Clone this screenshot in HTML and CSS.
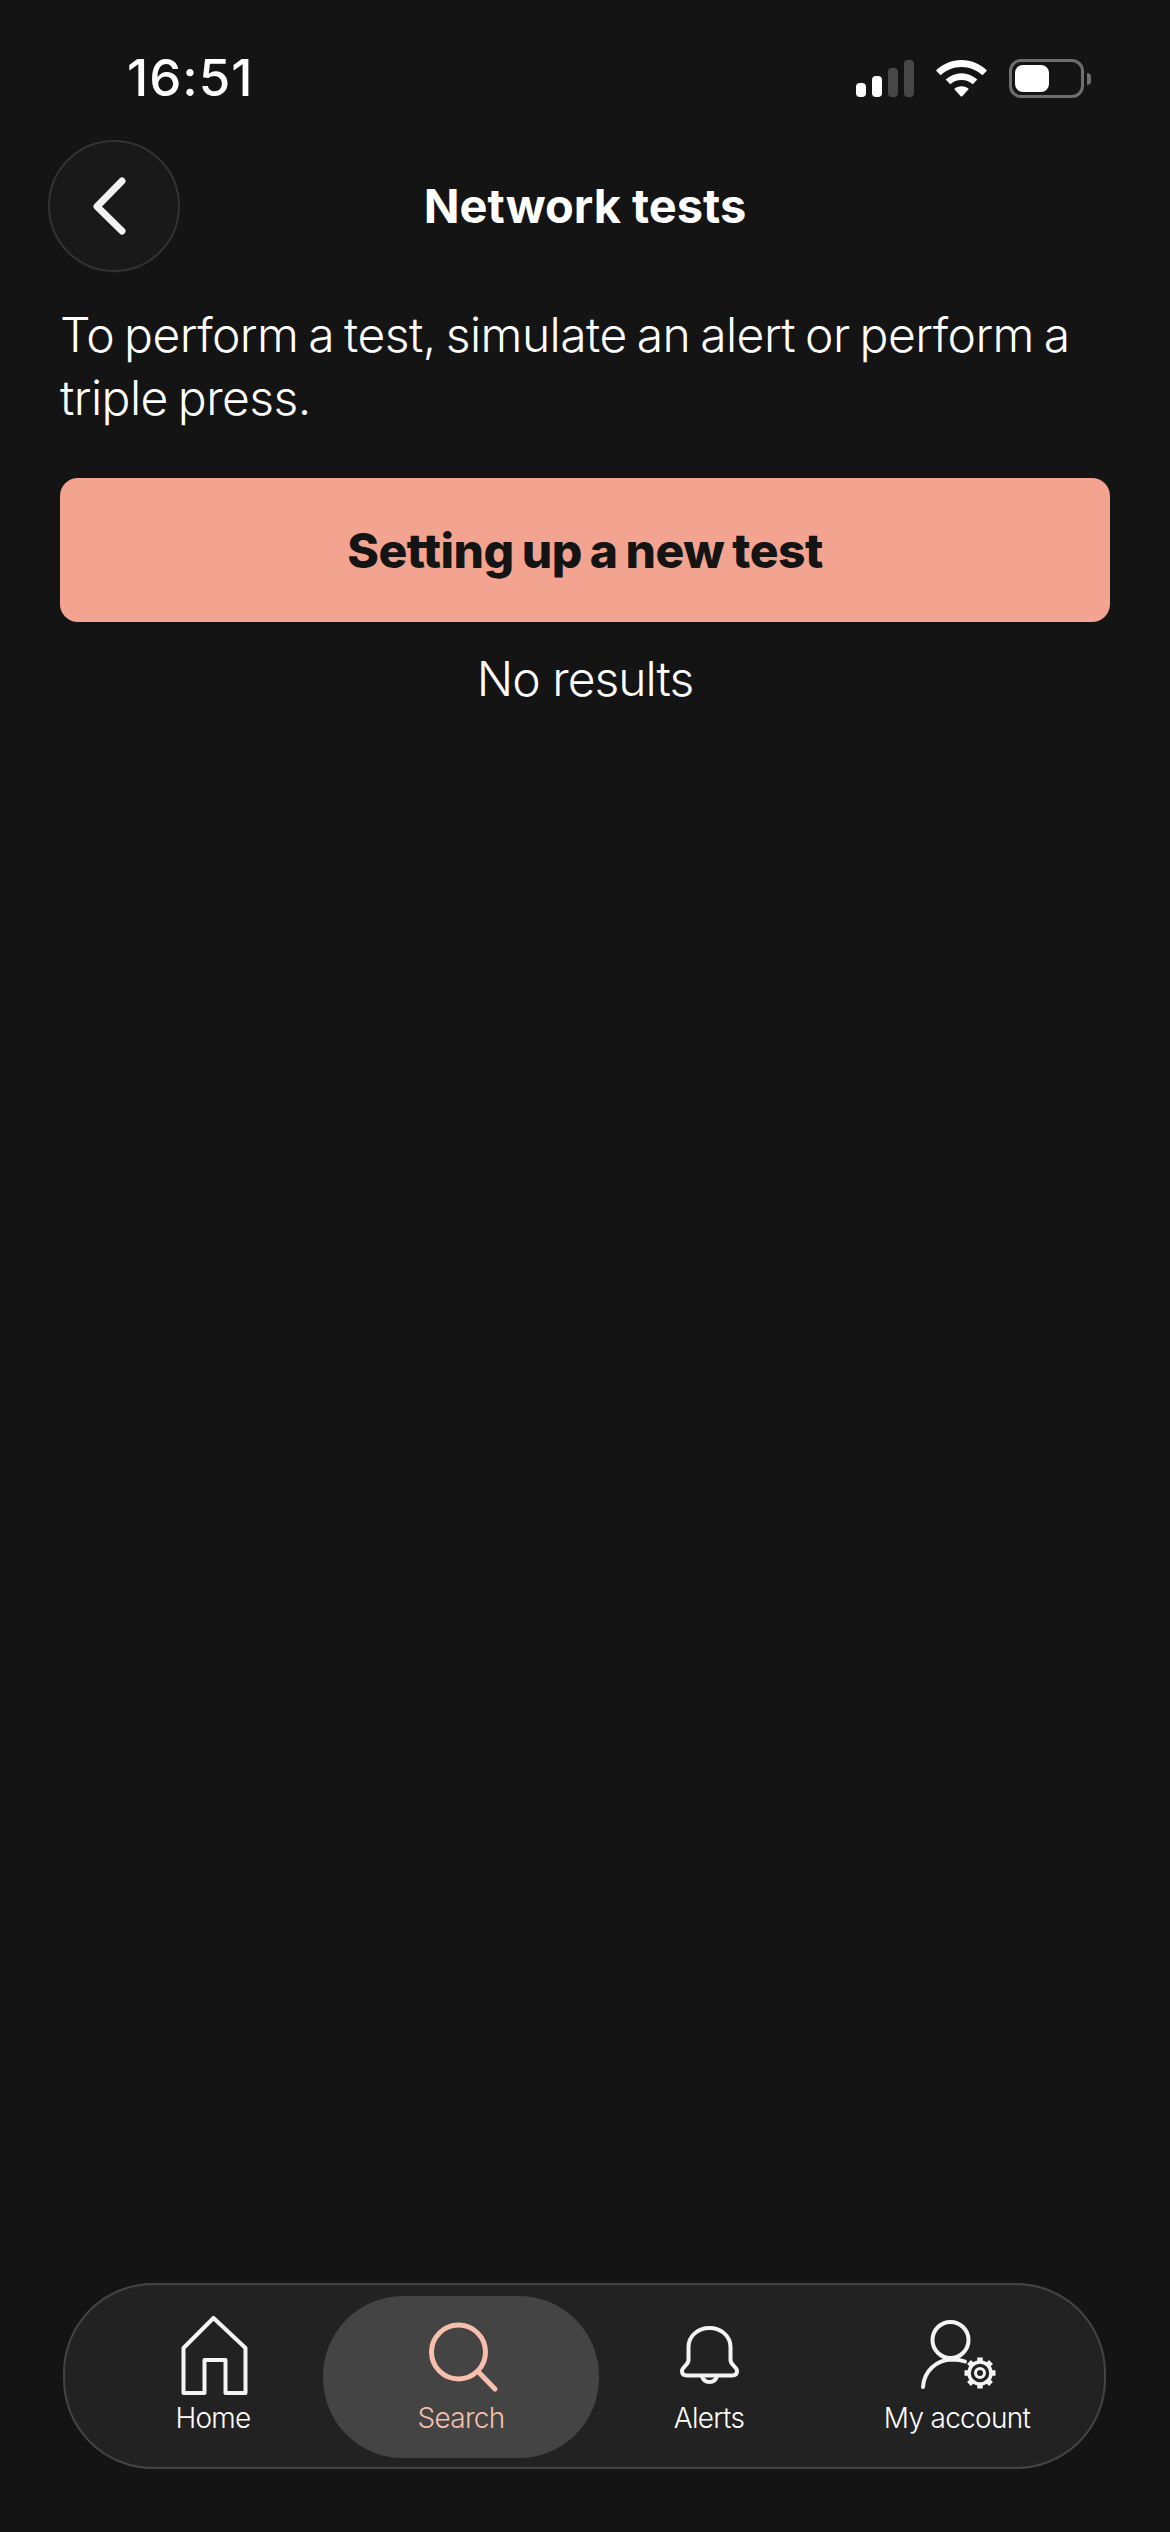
FILE: index.html
```html
<!DOCTYPE html>
<html lang="en">
<head>
<meta charset="utf-8">
<title>Network tests</title>
<link rel="stylesheet" href="styles.css">
</head>
<body>
<div class="screen">
  <div class="status">
    <span class="time">16:51</span>
    <div class="status-icons">
      <svg class="signal" width="58" height="37" viewBox="0 0 58 37">
        <rect x="0" y="23" width="10" height="14" rx="4" fill="#fff"/>
        <rect x="16" y="16" width="10" height="21" rx="4" fill="#fff"/>
        <rect x="32" y="8" width="10" height="29" rx="4" fill="#474747"/>
        <rect x="48" y="0" width="10" height="37" rx="4" fill="#474747"/>
      </svg>
      <svg class="wifi" width="51" height="37" viewBox="0 0 51 37">
        <path d="M25.500 0C35 0 44 3.800 51 10.500L46.500 15.300C40.800 10 33.400 6.900 25.500 6.900C17.600 6.900 10.200 10 4.500 15.300L0 10.500C7 3.800 16 0 25.500 0Z" fill="#fff"/>
        <path d="M25.500 13.200C31.500 13.200 37 15.500 41.300 19.500L36.800 24.200C33.700 21.500 29.800 20 25.500 20C21.200 20 17.300 21.500 14.200 24.200L9.700 19.500C14 15.500 19.500 13.200 25.500 13.200Z" fill="#fff"/>
        <path d="M25.500 26.200C28.300 26.200 30.800 27.200 32.800 29L26.300 36.200C25.900 36.700 25.100 36.700 24.700 36.200L18.200 29C20.200 27.200 22.700 26.200 25.500 26.200Z" fill="#fff"/>
      </svg>
      <div class="battery"><div class="battery-body"><div class="battery-fill"></div></div><div class="battery-nub"></div></div>
    </div>
  </div>

  <header class="header">
    <button class="back" aria-label="Back">
      <svg width="40" height="60" viewBox="0 0 40 60" fill="none"><path d="M31 5L6 30.500L31 55" stroke="#f2f2f2" stroke-width="7" stroke-linecap="round" stroke-linejoin="round"/></svg>
    </button>
    <h1 class="title">Network tests</h1>
  </header>

  <main class="content">
    <p class="intro">To perform a test, simulate an alert or perform a triple press.</p>
    <button class="primary">Setting up a new test</button>
    <p class="empty">No results</p>
  </main>

  <nav class="tabbar">
    <a class="tab">
      <svg class="tab-icon" width="80" height="80" viewBox="0 0 80 80" fill="none" stroke="#f4f4f4" stroke-width="4" stroke-linejoin="round"><path d="M40.500 2L10.500 32V77H31.500V44H52.500V77H72.500V32Z"/></svg>
      <span>Home</span>
    </a>
    <a class="tab tab-active">
      <svg class="tab-icon" width="80" height="80" viewBox="0 0 80 80" fill="none" stroke="#f7bfac" stroke-width="5" stroke-linecap="round"><circle cx="37.500" cy="36" r="27"/><path d="M57.500 56L74 73"/></svg>
      <span>Search</span>
    </a>
    <a class="tab">
      <svg class="tab-icon" width="80" height="80" viewBox="0 0 80 80" fill="none" stroke="#f4f4f4" stroke-width="4" stroke-linejoin="round"><path d="M40.500 12C29 12 19.500 20 19.500 31V44C19.500 49 13 51 13 55C13 58 15 59.500 18 59.500H63C66 59.500 68 58 68 55C68 51 61.500 49 61.500 44V31C61.500 20 52 12 40.500 12Z"/><path d="M33 60C34 64 37 66 40.500 66C44 66 47 64 48 60"/></svg>
      <span>Alerts</span>
    </a>
    <a class="tab">
      <svg class="tab-icon" width="80" height="80" viewBox="0 0 80 80" fill="none" stroke="#f4f4f4" stroke-width="4" stroke-linecap="round"><circle cx="33.500" cy="24" r="18"/><path d="M6 71C7 55 19 44 35 43.500C40 43.500 44 44 48 45.500"/><g transform="translate(63 57)"><circle r="4.500" stroke-width="3"/><circle r="11" stroke-width="3.500"/><path d="M0-10.500V-15.500M0 10.500V15.500M-10.500 0H-15.500M10.500 0H15.500M-7.500-7.500L-11-11M7.500-7.500L11-11M-7.500 7.500L-11 11M7.500 7.500L11 11" stroke-width="5.500" stroke-linecap="butt"/></g></svg>
      <span>My account</span>
    </a>
  </nav>
</div>
</body>
</html>
```

FILE: styles.css
```css
* { box-sizing: border-box; }
html, body { margin: 0; padding: 0; background: #141414; }
.screen {
  width: 1170px;
  height: 2532px;
  display: flex;
  flex-direction: column;
  color: #fff;
  font-family: Inter, "Liberation Sans", sans-serif;
  overflow: hidden;
}
.status {
  height: 140px;
  padding: 46px 79px 0 127px;
  display: flex;
  justify-content: space-between;
  align-items: flex-start;
}
.time { font-size: 51px; line-height: 64px; font-weight: 500; letter-spacing: 1px; }
.status-icons { display: flex; align-items: center; margin-top: 13px; gap: 22px; }
.battery { display: flex; align-items: center; gap: 3px; }
.battery-body {
  width: 75px; height: 39px;
  border: 3px solid #6e6e6e;
  border-radius: 12px;
  padding: 3px;
}
.battery-fill { width: 34px; height: 27px; background: #fff; border-radius: 8px; }
.battery-nub { width: 4px; height: 12px; background: #6e6e6e; border-radius: 0 6px 6px 0; }

.header {
  display: flex;
  align-items: center;
  padding: 0 48px;
  height: 132px;
  position: relative;
}
.back {
  width: 132px; height: 132px;
  border-radius: 50%;
  border: 2px solid #333;
  background: #191919;
  box-shadow: 0 6px 16px rgba(255,255,255,.012);
  padding: 0 7px 0 0;
  display: flex;
  align-items: center;
  justify-content: center;
}
.title {
  flex: 1;
  margin: 0 132px 0 0;
  text-align: center;
  font-size: 47px;
  font-weight: 700;
  letter-spacing: 0;
  line-height: 60px;
}
.content { padding: 0 60px; display: flex; flex-direction: column; }
.intro {
  margin: 31px 0 0;
  font-size: 48px;
  line-height: 63px;
  font-weight: 300;
  letter-spacing: -0.55px;
  word-spacing: -3px;
}
.primary {
  margin-top: 49px;
  height: 144px;
  border: 0;
  border-radius: 18px;
  background: #f2a491;
  color: #141414;
  font-family: inherit;
  font-size: 48px;
  font-weight: 800;
  letter-spacing: -0.5px;
  word-spacing: -2px;
}
.empty {
  margin: 27px 0 0;
  text-align: center;
  font-size: 48px;
  line-height: 60px;
  font-weight: 300;
  letter-spacing: -1px;
}
.tabbar {
  margin: auto 64px 63px 63px;
  height: 186px;
  border-radius: 90px;
  background: #222;
  border: 2px solid #444;
  padding: 31px 22px 0 24px;
  display: flex;
}
.tab {
  position: relative;
  width: 248px;
  display: flex;
  flex-direction: column;
  align-items: center;
  font-size: 28px;
  line-height: 34px;
  font-weight: 300;
  letter-spacing: -0.7px;
  color: #fff;
}
.tab span, .tab svg { position: relative; }
.tab-icon { display: block; margin-bottom: 5px; }
.tab-active { color: #f7bfac; }
.tab-active::before {
  content: "";
  position: absolute;
  left: -14px; right: -14px; top: -20px;
  height: 162px;
  border-radius: 80px;
  background: #444;
}
```
